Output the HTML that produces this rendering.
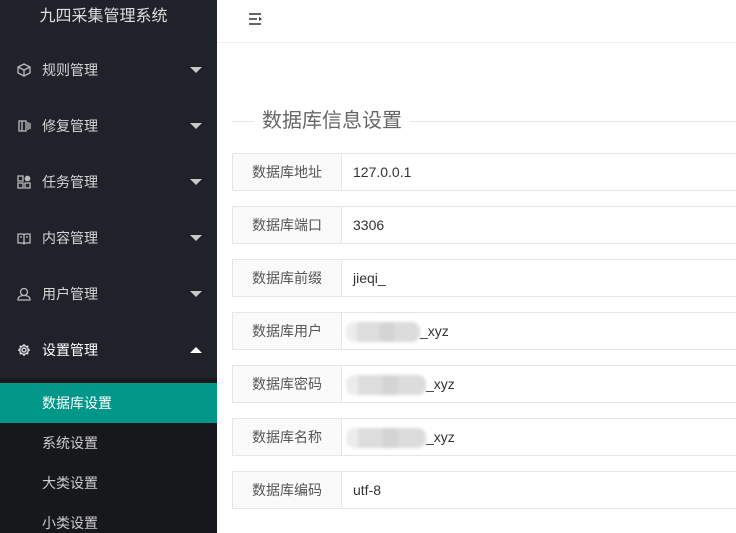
<!DOCTYPE html><html><head><meta charset="utf-8"><style>
*{margin:0;padding:0;box-sizing:border-box}
html{width:736px;height:533px;overflow:hidden}
body{width:736px;height:533px;overflow:hidden;font-family:"Liberation Sans","Noto Sans CJK SC",sans-serif;background:#fff;position:relative}
.side{position:absolute;left:0;top:0;width:217px;height:533px;background:#20222a;overflow:hidden}
.logo{height:42px;line-height:34px;text-align:center;color:#ddd;font-size:16px;padding-right:10px}
.mi{height:56px;line-height:56px;color:#d6d6d6;font-size:14px;padding-left:42px;position:relative}
.mi svg{position:absolute;left:17px;top:21px}
.arr{position:absolute;left:190px;top:25px;width:0;height:0;border-left:6px solid transparent;border-right:6px solid transparent;border-top:6px solid #c8c8c8}
.arr.up{border-top:none;border-bottom:6px solid #fff}
.sub{background:#17181c;padding-top:5px;height:155px;overflow:hidden}
.si{height:40px;line-height:40px;padding-left:42px;color:#ccc;font-size:14px}
.si.on{background:#009688;color:#fff}
.head{position:absolute;left:217px;top:0;right:0;height:43px;border-bottom:1px solid #f0f0f0}
.legend{position:absolute;left:232px;top:121px;width:504px;border-top:1px solid #e6e6e6}
.legend span{position:absolute;left:22px;top:-14px;background:#fff;padding:0 8px;font-size:20px;color:#666;line-height:26px}
.row{position:absolute;left:232px;width:504px;height:38px;border:1px solid #e6e6e6;border-right:none;font-size:14px}
.row .l{position:absolute;left:0;top:0;width:109px;height:36px;background:#fafafa;border-right:1px solid #e6e6e6;line-height:36px;text-align:center;color:#555}
.row .v{position:absolute;left:120px;top:0;line-height:36px;color:#333}
.blur{display:inline-block;width:74px;height:20px;vertical-align:middle;background:linear-gradient(90deg,#ececec 0 15%,#ddd 15% 45%,#d4d4d4 45% 65%,#dcdcdc 65% 100%);border-radius:8px;filter:blur(1.5px)}
</style></head><body>
<div class="side">
<div class="logo">九四采集管理系统</div>
<div class="mi"><svg width="14" height="14" viewBox="0 0 14 14" fill="none" stroke="#bbb" stroke-width="1.3"><path d="M7 1L13 4V10L7 13L1 10V4Z M1 4L7 7L13 4 M7 7V13"/></svg>规则管理<i class="arr"></i></div>
<div class="mi"><svg width="14" height="14" viewBox="0 0 14 14" fill="none" stroke="#bbb" stroke-width="1.3"><path d="M2 2H9V12H2Z M5 2V12 M11 3V11 M13 4V10"/></svg>修复管理<i class="arr"></i></div>
<div class="mi"><svg width="14" height="14" viewBox="0 0 14 14" fill="none" stroke="#bbb" stroke-width="1.3"><path d="M1 1H6V6H1Z M1 8H6V13H1Z M8 8H13V13H8Z"/><circle cx="10.5" cy="3.5" r="2.2" fill="#bbb"/></svg>任务管理<i class="arr"></i></div>
<div class="mi"><svg width="14" height="14" viewBox="0 0 14 14" fill="none" stroke="#bbb" stroke-width="1.3"><path d="M1 3H6L7 4L8 3H13V12H8L7 13L6 12H1Z M7 4V13 M3 6H5 M9 6H11"/></svg>内容管理<i class="arr"></i></div>
<div class="mi"><svg width="14" height="14" viewBox="0 0 14 14" fill="none" stroke="#bbb" stroke-width="1.3"><circle cx="7" cy="5" r="3.5"/><path d="M1 13C1 9 4 8.5 7 8.5S13 9 13 13Z"/></svg>用户管理<i class="arr"></i></div>
<div class="mi" style="color:#fff"><svg width="14" height="14" viewBox="0 0 14 14" fill="none" stroke="#ddd" stroke-width="1.4"><circle cx="7" cy="7" r="2"/><path d="M7 1V3 M7 11V13 M1 7H3 M11 7H13 M2.8 2.8L4.2 4.2 M9.8 9.8L11.2 11.2 M2.8 11.2L4.2 9.8 M9.8 4.2L11.2 2.8"/><circle cx="7" cy="7" r="4.3"/></svg>设置管理<i class="arr up"></i></div>
<div class="sub">
<div class="si on">数据库设置</div>
<div class="si">系统设置</div>
<div class="si">大类设置</div>
<div class="si">小类设置</div>
</div>
</div>
<div class="head"><svg style="position:absolute;left:31px;top:12px" width="16" height="14" viewBox="0 0 16 14" fill="none" stroke="#333" stroke-width="1.6"><path d="M1 2H13 M1 7H9 M1 12H13"/><path d="M11 5L14 7L11 9Z" fill="#333" stroke="none"/></svg></div>
<div class="legend"><span>数据库信息设置</span></div>
<div class="row" style="top:153px"><div class="l">数据库地址</div><div class="v">127.0.0.1</div></div>
<div class="row" style="top:206px"><div class="l">数据库端口</div><div class="v">3306</div></div>
<div class="row" style="top:259px"><div class="l">数据库前缀</div><div class="v">jieqi_</div></div>
<div class="row" style="top:312px"><div class="l">数据库用户</div><div class="v" style="left:113px"><span class="blur"></span>_xyz</div></div>
<div class="row" style="top:365px"><div class="l">数据库密码</div><div class="v" style="left:113px"><span class="blur" style="width:80px"></span>_xyz</div></div>
<div class="row" style="top:418px"><div class="l">数据库名称</div><div class="v" style="left:113px"><span class="blur" style="width:80px"></span>_xyz</div></div>
<div class="row" style="top:471px"><div class="l">数据库编码</div><div class="v">utf-8</div></div>
</body></html>
